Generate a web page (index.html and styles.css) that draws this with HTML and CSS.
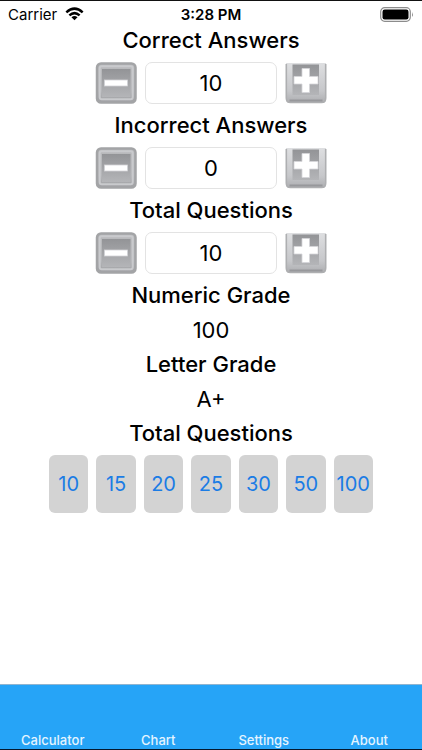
FILE: index.html
```html
<!DOCTYPE html>
<html lang="en">
<head>
  <meta charset="UTF-8" />
  <meta name="viewport" content="width=device-width,initial-scale=1.0" />
  <title>Grade Calculator</title>
  <link rel="stylesheet" href="styles.css">
</head>
<body>
  <!-- shared button drawings -->
  <svg class="defs" aria-hidden="true">
    <defs>
      <linearGradient id="rim" x1="0" y1="0" x2="0" y2="1">
        <stop offset="0" stop-color="#b9babc" />
        <stop offset="0.7" stop-color="#b4b5b8" />
        <stop offset="1" stop-color="#a0a1a4" />
      </linearGradient>
      <linearGradient id="face" x1="0" y1="0" x2="0" y2="1">
        <stop offset="0" stop-color="#939497" />
        <stop offset="1" stop-color="#b4b5b8" />
      </linearGradient>
      <linearGradient id="plusRim" x1="0" y1="0" x2="0" y2="1">
        <stop offset="0" stop-color="#dedfe1" />
        <stop offset="0.7" stop-color="#c6c7ca" />
        <stop offset="1" stop-color="#acadb0" />
      </linearGradient>
    </defs>
    <symbol id="minus" viewBox="0 0 42 42">
      <rect x="2" y="1.5" width="38.5" height="39" rx="4" fill="url(#rim)" stroke="#a3a4a6" stroke-width="2.5" />
      <rect x="4.7" y="4.2" width="33" height="33" rx="2" fill="none" stroke="#c9cacd" stroke-width="2" />
      <rect x="7" y="7" width="28.5" height="28" fill="url(#face)" />
      <rect x="9.5" y="18" width="23" height="6" fill="#fff" stroke="#d2d3d6" stroke-width="0.8" />
    </symbol>
    <symbol id="plus" viewBox="0 0 42 42">
      <path d="M1 1h40v36q0 4-4 4H5q-4 0-4-4z" fill="url(#plusRim)" />
      <path d="M1.3 2v34q0 4.5 4.2 4.5h31q4.2 0 4.2-4.5V2" fill="none" stroke="#aeafb1" stroke-width="1.6" />
      <path d="M4.5 38.5h33" stroke="#97989b" stroke-width="2" />
      <rect x="7.5" y="2.5" width="26.5" height="30.5" fill="url(#face)" />
      <path d="M17 6.5h7.5v8h8.5v7.5h-8.5v8.5H17V22H9v-7.5h8z" fill="#fff" stroke="#d5d6d9" stroke-width="0.8" />
    </symbol>
  </svg>

  <header class="status-bar">
    <span class="carrier">
      Carrier
      <svg class="wifi" viewBox="0 0 20 14" aria-label="Wi-Fi">
        <g fill="none" stroke="#000" stroke-width="2.6">
          <path d="M1.4 5.2Q10-2.6 18.6 5.2" />
          <path d="M4.6 8.5q5.4-4.8 10.8 0" />
        </g>
        <path d="M6.8 10.4q3.2-2.6 6.4 0L10 13.6z" />
      </svg>
    </span>
    <span class="time">3:28 PM</span>
    <span class="battery">
      <svg viewBox="0 0 34 15" aria-label="Battery full">
        <rect x="0.7" y="0.7" width="29.6" height="13.6" rx="4" fill="#fff" stroke="#8c8c8c" stroke-width="1.2" />
        <rect x="2.5" y="2.5" width="26" height="10" rx="2.2" />
        <path d="M32 5q1.8 2.5 0 5z" fill="#8c8c8c" />
      </svg>
    </span>
  </header>

  <main class="content">
    <label class="heading" for="correct">Correct Answers</label>
    <div class="stepper">
      <button class="step" type="button" aria-label="Fewer correct answers"><svg><use href="#minus" /></svg></button>
      <input class="number" id="correct" type="text" inputmode="numeric" value="10">
      <button class="step" type="button" aria-label="More correct answers"><svg><use href="#plus" /></svg></button>
    </div>

    <label class="heading" for="incorrect">Incorrect Answers</label>
    <div class="stepper">
      <button class="step" type="button" aria-label="Fewer incorrect answers"><svg><use href="#minus" /></svg></button>
      <input class="number" id="incorrect" type="text" inputmode="numeric" value="0">
      <button class="step" type="button" aria-label="More incorrect answers"><svg><use href="#plus" /></svg></button>
    </div>

    <label class="heading" for="total">Total Questions</label>
    <div class="stepper">
      <button class="step" type="button" aria-label="Fewer questions"><svg><use href="#minus" /></svg></button>
      <input class="number" id="total" type="text" inputmode="numeric" value="10">
      <button class="step" type="button" aria-label="More questions"><svg><use href="#plus" /></svg></button>
    </div>

    <h2 class="heading">Numeric Grade</h2>
    <output class="grade">100</output>
    <h2 class="heading">Letter Grade</h2>
    <output class="grade">A+</output>

    <h2 class="heading">Total Questions</h2>
    <div class="presets">
      <button class="preset" type="button">10</button>
      <button class="preset" type="button">15</button>
      <button class="preset" type="button">20</button>
      <button class="preset" type="button">25</button>
      <button class="preset" type="button">30</button>
      <button class="preset" type="button">50</button>
      <button class="preset" type="button">100</button>
    </div>
  </main>

  <nav class="tab-bar">
    <a href="#calculator">Calculator</a>
    <a href="#chart">Chart</a>
    <a href="#settings">Settings</a>
    <a href="#about">About</a>
  </nav>
</body>
</html>
```
FILE: styles.css
```css
* {
  box-sizing: border-box;
}

body {
  margin: 0;
  min-height: 100vh;
  display: flex;
  flex-direction: column;
  background: #fff;
  color: #000;
  font-family: Inter, "Liberation Sans", sans-serif;
  border-top: 1px solid #111;
  border-bottom: 1px solid #04182e;
}

.defs {
  position: absolute;
  width: 0;
  height: 0;
}

.status-bar {
  display: grid;
  grid-template-columns: 1fr auto 1fr;
  align-items: center;
  height: 26px;
  padding: 0 8px;
  font-size: 15px;
}

.carrier {
  display: flex;
  align-items: center;
  gap: 8px;
}

.wifi {
  width: 19px;
  height: 14px;
}

.time {
  font-weight: 600;
}

.battery {
  display: flex;
  justify-content: flex-end;
}

.battery svg {
  width: 34px;
  height: 15px;
}

.content {
  flex: 1;
  display: flex;
  flex-direction: column;
  align-items: center;
  gap: 8px;
}

.heading {
  margin: 0;
  font-size: 22px;
  font-weight: 550;
  line-height: 27px;
}

.grade {
  font-size: 22px;
  line-height: 26px;
}

.stepper {
  display: flex;
  gap: 8px;
}

.step {
  width: 42px;
  height: 42px;
  padding: 0;
  border: none;
  background: none;
}

.step svg {
  display: block;
  width: 100%;
  height: 100%;
}

.number {
  width: 132px;
  height: 42px;
  padding: 0;
  border: 1px solid #e3e3e3;
  border-radius: 7px;
  background: #fff;
  color: #000;
  font: inherit;
  font-size: 22px;
  text-align: center;
}

.presets {
  display: flex;
  gap: 8px;
  width: 324px;
  max-width: 100%;
}

.preset {
  flex: 1 1 0;
  min-width: 0;
  height: 58px;
  padding: 0;
  border: none;
  border-radius: 6px;
  background: #d3d3d3;
  color: #1b7ce5;
  font: inherit;
  font-size: 20px;
}

.tab-bar {
  display: grid;
  grid-template-columns: repeat(4, 1fr);
  align-items: end;
  height: 65px;
  border-top: 1px solid #8fb4d0;
  background: #26a4f7;
}

.tab-bar a {
  color: #e4f4ff;
  font-size: 13px;
  font-weight: 500;
  line-height: 18px;
  text-align: center;
  text-decoration: none;
}
```
